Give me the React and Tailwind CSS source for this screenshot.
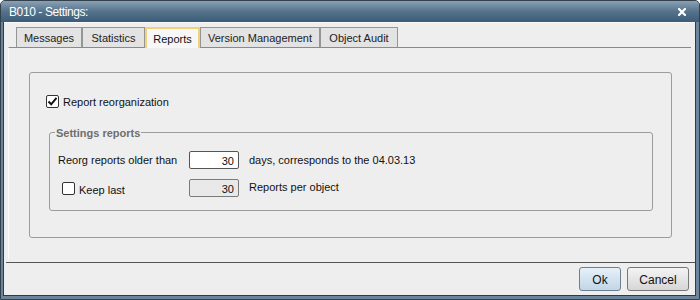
import React from "react";

function Check({ checked }) {
  return (
    <div className="w-[13px] h-[13px] border border-[#333333] rounded-[2px] bg-white flex items-center justify-center shrink-0">
      {checked && (
        <svg width="11" height="11" viewBox="0 0 11 11">
          <path d="M1.5 5.5 L4.2 8.3 L9.5 1.8" fill="none" stroke="#111" strokeWidth="2" />
        </svg>
      )}
    </div>
  );
}

function Tab({ label, w, selected }) {
  if (selected) {
    return (
      <div
        className="h-[21px] -mb-px border-2 border-b-0 border-[#f1d27a] bg-[#f7f7f7] flex items-start justify-center pt-[2px] text-[#111] relative z-10"
        style={{ width: w }}
      >
        {label}
      </div>
    );
  }
  return (
    <div
      className="h-[20px] border border-b-0 border-[#959595] bg-[#e3e3e3] flex items-center justify-center pt-[2px] text-[#222]"
      style={{ width: w }}
    >
      {label}
    </div>
  );
}

export default function App() {
  return (
    <div className="w-[700px] h-[300px] bg-[#6b869c] border border-[#34414d] rounded-t-[5px] flex flex-col font-['Liberation_Sans',Arial,sans-serif] text-[11px] text-[#111] overflow-hidden">
      <div className="h-[21px] shrink-0 bg-gradient-to-b from-[#8aa1b4] via-[#55738c] to-[#3b5b77] flex items-center pl-[8px] pr-[13px]">
        <span className="text-white text-[12px] tracking-[-0.4px]">B010 - Settings:</span>
        <div className="flex-1" />
        <svg width="8" height="8" viewBox="0 0 8 8">
          <path d="M1 1 L7 7 M7 1 L1 7" stroke="white" strokeWidth="2.2" strokeLinecap="square" />
        </svg>
      </div>
      <div className="flex-1 ml-[2px] mr-[3px] mb-[3px] border border-t-0 border-[#2f3a44] bg-[#eeeeee] flex flex-col">
        <div className="h-px bg-[#fafafa] shrink-0" />
        <div className="pt-[3px] pl-[12px] flex items-end h-[24px] shrink-0">
          <Tab label="Messages" w={66} />
          <Tab label="Statistics" w={63} />
          <Tab label="Reports" w={55} selected />
          <Tab label="Version Management" w={120} />
          <Tab label="Object Audit" w={78} />
        </div>
        <div className="mx-[4px] h-[212px] shrink-0 border-t border-l border-t-[#8a8a8a] border-l-[#fbfbfb] bg-[#eeeeee] pl-[20px] pt-[24px] pr-[19px]">
          <div className="h-[166px] border border-[#9c9c9c] rounded-[3px] pt-[22px]">
            <div className="flex items-center pl-[16px] h-[13px]">
              <Check checked />
              <span className="ml-[4px] pt-[1px]">Report reorganization</span>
            </div>
            <div className="relative ml-[19px] mt-[24px] w-[604px] h-[79px] border border-[#9c9c9c] rounded-[3px]">
              <span className="absolute -top-[7px] left-[5px] px-px bg-[#eeeeee] font-bold text-[#6e6e6e] leading-[14px]">
                Settings reports
              </span>
              <div className="flex items-center mt-[18px] pl-[8px] h-[18px]">
                <span className="w-[131px]">Reorg reports older than</span>
                <div className="w-[50px] h-[18px] bg-white border border-[#555] rounded-[2px] flex items-center justify-end pr-[4px] pt-[2px]">
                  30
                </div>
                <span className="ml-[10px]">days, corresponds to the 04.03.13</span>
              </div>
              <div className="flex items-center mt-[10px] pl-[12px] h-[18px]">
                <Check />
                <span className="ml-[4px] w-[110px] pt-[4px]">Keep last</span>
                <div className="w-[50px] h-[18px] bg-[#e9e9e9] border border-[#7a7a7a] rounded-[2px] flex items-center justify-end pr-[4px] pt-[2px]">
                  30
                </div>
                <span className="ml-[10px] -mt-[2px]">Reports per object</span>
              </div>
            </div>
          </div>
        </div>
        <div className="mt-[3px] ml-[2px] h-px bg-[#555555] shrink-0" />
        <div className="flex justify-end gap-[6px] pr-[6px] mt-[4px]">
          <button className="w-[42px] h-[24px] border border-[#6f7f8f] rounded-[3px] bg-gradient-to-b from-[#e6f0f8] to-[#c2d6e8] text-[12px] text-[#111] pt-[1px]">
            Ok
          </button>
          <button className="w-[62px] h-[24px] border border-[#777] rounded-[3px] bg-gradient-to-b from-[#f4f4f4] to-[#d6d6d6] text-[12px] text-[#111] pt-[1px]">
            Cancel
          </button>
        </div>
      </div>
    </div>
  );
}
